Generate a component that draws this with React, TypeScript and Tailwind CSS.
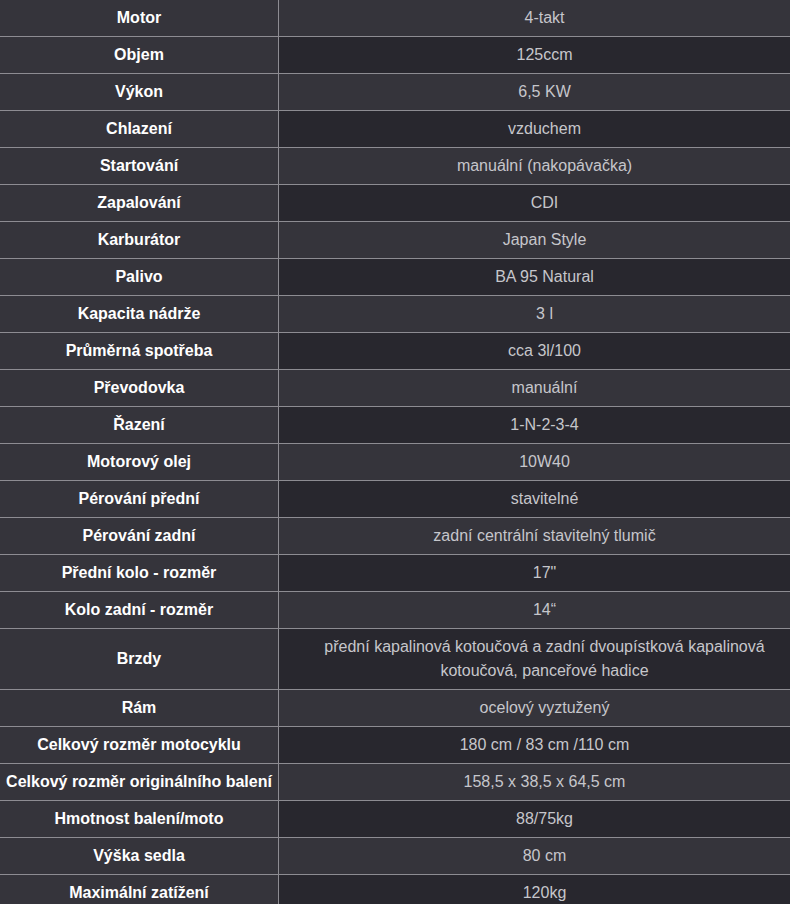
import React from 'react';

const rows: [string, string][] = [
  ['Motor', '4-takt'],
  ['Objem', '125ccm'],
  ['Výkon', '6,5 KW'],
  ['Chlazení', 'vzduchem'],
  ['Startování', 'manuální (nakopávačka)'],
  ['Zapalování', 'CDI'],
  ['Karburátor', 'Japan Style'],
  ['Palivo', 'BA 95 Natural'],
  ['Kapacita nádrže', '3 l'],
  ['Průměrná spotřeba', 'cca 3l/100'],
  ['Převodovka', 'manuální'],
  ['Řazení', '1-N-2-3-4'],
  ['Motorový olej', '10W40'],
  ['Pérování přední', 'stavitelné'],
  ['Pérování zadní', 'zadní centrální stavitelný tlumič'],
  ['Přední kolo - rozměr', '17"'],
  ['Kolo zadní - rozměr', '14“'],
  ['Brzdy', 'přední kapalinová kotoučová a zadní dvoupístková kapalinová kotoučová, panceřové hadice'],
  ['Rám', 'ocelový vyztužený'],
  ['Celkový rozměr motocyklu', '180 cm / 83 cm /110 cm'],
  ['Celkový rozměr originálního balení', '158,5 x 38,5 x 64,5 cm'],
  ['Hmotnost balení/moto', '88/75kg'],
  ['Výška sedla', '80 cm'],
  ['Maximální zatížení', '120kg'],
];

export default function App() {
  return (
    <div className="min-h-screen w-[790px] bg-[#35343b] font-['Liberation_Sans',Arial,sans-serif] text-[16px] leading-[24px]">
      {rows.map(([label, value], i) => (
        <div key={label} className="flex border-b border-[#8d8c92]">
          <div className="w-[279px] shrink-0 border-r border-[#8d8c92] bg-[#35343b] px-[2px] py-[6px] text-center font-bold text-white flex items-center justify-center">
            {label}
          </div>
          <div
            className={
              i % 2 === 1
                ? 'flex-1 bg-[#28272e] pl-[30px] pr-[10px] py-[6px] text-center text-[#c6c6cb]'
                : 'flex-1 bg-[#35343b] pl-[30px] pr-[10px] py-[6px] text-center text-[#c6c6cb]'
            }
          >
            {value}
          </div>
        </div>
      ))}
    </div>
  );
}
